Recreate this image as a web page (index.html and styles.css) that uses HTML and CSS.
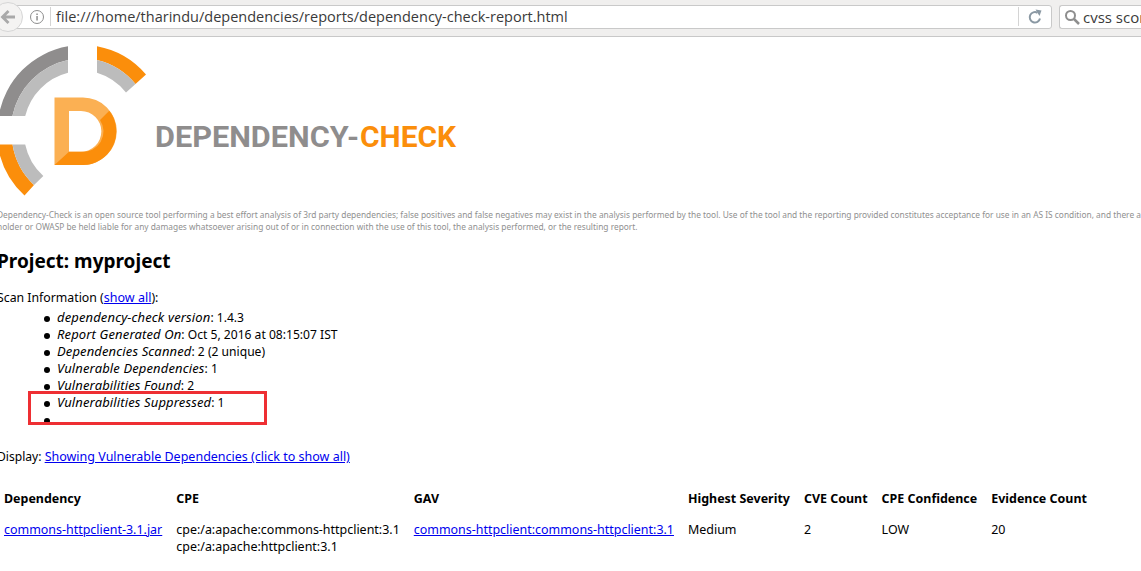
FILE: index.html
```html
<!DOCTYPE html>
<html lang="en">
<head>
<meta charset="utf-8">
<title>Dependency-Check Report</title>
<link rel="stylesheet" href="styles.css">
</head>
<body>
<header class="toolbar">
  <span class="back">
    <svg width="20" height="20" viewBox="0 0 20 20"><path d="M2.500 10 9.500 3 11.500 5 8 8.500H17V11.500H8L11.500 15 9.500 17Z" fill="#a9a9a9"/></svg>
  </span>
  <div class="urlbar">
    <svg class="info" width="16" height="16" viewBox="0 0 16 16"><circle cx="8" cy="8" r="6.500" fill="none" stroke="#8e8e8e"/><rect x="7.300" y="7" width="1.500" height="4.500" fill="#8e8e8e"/><rect x="7.300" y="4.500" width="1.500" height="1.500" fill="#8e8e8e"/></svg>
    <span class="divider"></span>
    <span class="url">file:///home/tharindu/dependencies/reports/dependency-check-report.html</span>
    <span class="divider end"></span>
    <svg class="reload" width="16" height="16" viewBox="0 0 16 16"><path d="M13 9.500A5.200 5.200 0 1 1 10.500 3.800" fill="none" stroke="#8a98a3" stroke-width="2"/><path d="M8.500 0.500 14.500 1.500 12.500 7Z" fill="#8a98a3"/></svg>
  </div>
  <div class="searchbar">
    <svg class="search-icon" width="16" height="16" viewBox="0 0 16 16"><circle cx="6.500" cy="6.500" r="4.500" fill="none" stroke="#8e8e8e" stroke-width="2"/><path d="M10 10 15 15" stroke="#8e8e8e" stroke-width="2.500"/></svg>
    <span class="query">cvss score</span>
  </div>
</header>
<main class="page">
  <svg class="logo" width="470" height="158" viewBox="0 0 470 158">
    <g transform="translate(3 -46)">
      <path d="M68 46.300A85 85 0 0 0-1.300 116H12.400A71.500 71.500 0 0 1 68 60Z" fill="#8f8d8d"/>
      <path d="M68 60A71.500 71.500 0 0 0 12.400 116H25.200A59 59 0 0 1 68 72.800Z" fill="#bcbcbc"/>
      <path d="M97 46.300A85 85 0 0 1 146 74.500L135.500 84A71.500 71.500 0 0 0 97 60Z" fill="#fb8e0b"/>
      <path d="M97 60A71.500 71.500 0 0 1 135.500 84L126 92.500A59 59 0 0 0 97 72.800Z" fill="#bcbcbc"/>
      <path d="M-2.300 144.500A86 86 0 0 0 24.500 195.500L34 185A71.500 71.500 0 0 1 12.500 144.500Z" fill="#fb8e0b"/>
      <path d="M12.500 144.500A71.500 71.500 0 0 0 34 185L43.300 176A59 59 0 0 1 25.200 144.500Z" fill="#bcbcbc"/>
      <path fill-rule="evenodd" d="M54.500 97.500H83A33.750 33.750 0 0 1 83 165H54.500ZM69 111V151.700H81A20.350 20.350 0 0 0 81 111Z" fill="#fbb053"/>
      <path d="M54.500 165 69 151.700H81A20.350 20.350 0 0 0 100 120L109.300 110.700A33.750 33.750 0 0 1 83 165Z" fill="#fb8e0b"/>
    </g>
    <text class="logo-text" x="158" y="101" fill="#8f8d8d" textLength="204" lengthAdjust="spacingAndGlyphs">DEPENDENCY-</text>
    <text class="logo-text" x="363" y="101" fill="#fb8e0b" textLength="96" lengthAdjust="spacingAndGlyphs">CHECK</text>
  </svg>
  <p class="notice">Dependency-Check is an open source tool performing a best effort analysis of 3rd party dependencies; false positives and false negatives may exist in the analysis performed by the tool. Use of the tool and the reporting provided constitutes acceptance for use in an AS IS condition, and there are NO warranties, implied or otherwise, with regard to the analysis or its use. In no event shall the copyright<br>holder or OWASP be held liable for any damages whatsoever arising out of or in connection with the use of this tool, the analysis performed, or the resulting report.</p>
  <h2 class="project">Project: myproject</h2>
  <p class="scan">Scan Information (<a href="#">show all</a>):</p>
  <ul class="info-list">
    <li><i>dependency-check version</i>: 1.4.3</li>
    <li><i>Report Generated On</i>: Oct 5, 2016 at 08:15:07 IST</li>
    <li><i>Dependencies Scanned</i>: 2 (2 unique)</li>
    <li><i>Vulnerable Dependencies</i>: 1</li>
    <li><i>Vulnerabilities Found</i>: 2</li>
    <li><i>Vulnerabilities Suppressed</i>: 1</li>
    <li></li>
  </ul>
  <p class="display">Display: <a href="#">Showing Vulnerable Dependencies (click to show all)</a></p>
  <table class="deps">
    <thead>
      <tr><th>Dependency</th><th>CPE</th><th>GAV</th><th>Highest Severity</th><th>CVE Count</th><th>CPE Confidence</th><th>Evidence Count</th></tr>
    </thead>
    <tbody>
      <tr>
        <td><a href="#">commons-httpclient-3.1.jar</a></td>
        <td>cpe:/a:apache:commons-httpclient:3.1<br>cpe:/a:apache:httpclient:3.1</td>
        <td><a href="#">commons-httpclient:commons-httpclient:3.1</a></td>
        <td>Medium</td><td>2</td><td>LOW</td><td>20</td>
      </tr>
    </tbody>
  </table>
</main>
<div class="highlight"></div>
</body>
</html>
```
FILE: styles.css
```css
html, body { margin: 0; padding: 0; height: 571px; overflow: hidden; background: #fff; }
body { font-family: "Noto Sans", "Open Sans", sans-serif; font-size: 12.500px; color: #000; width: 1141px; }
.toolbar { height: 33px; padding-bottom: 3px; background: #f0efee; border-bottom: 1px solid #c8c8c8; display: flex; align-items: center; box-sizing: content-box; position: relative; }
.back { width: 28px; height: 28px; margin-left: -7px; border: 1px solid #d6d6d6; border-radius: 50%; background: #f4f3f2; display: flex; align-items: center; justify-content: center; flex: none; position: relative; z-index: 1; }
.urlbar { width: 1034px; height: 22px; margin-left: -7px; background: #fff; border: 1px solid #c9c9c9; border-radius: 0 3px 3px 0; display: flex; align-items: center; flex: none; box-sizing: content-box; }
.info { margin-left: 12px; flex: none; }
.divider { width: 1px; height: 19px; background: #d4d4d4; margin-left: 5px; flex: none; }
.url { margin-left: 5px; font-family: "Open Sans", sans-serif; font-size: 14.500px; color: #3a3a3a; white-space: nowrap; flex: 1; }
.divider.end { margin-left: 0; }
.reload { margin: 0 8px 0 8px; flex: none; }
.searchbar { height: 22px; margin-left: 7px; padding-left: 4px; background: #fff; border: 1px solid #c9c9c9; border-radius: 3px 0 0 3px; border-right: 0; display: flex; align-items: center; gap: 3px; flex: 1; min-width: 0; overflow: hidden; }
.search-icon { flex: none; }
.query { font-family: "Open Sans", sans-serif; font-size: 15px; color: #3a3a3a; white-space: nowrap; }
.page { margin-left: -3px; }
.logo { display: block; margin-top: 9px; overflow: visible; }
.logo-text { font-family: Roboto, sans-serif; font-weight: 700; font-size: 30px; }
.notice { margin: 5px 0 0; font-size: 8.350px; line-height: 12px; color: #909090; white-space: nowrap; }
.project { margin: 15px 0 0; font-size: 19px; line-height: 27px; font-weight: 700; }
.scan { margin: 14px 0 0; font-size: 12.300px; line-height: 17px; }
.scan a { font-size: 12.500px; }
.info-list { margin: 3px 0 0; padding: 0 0 0 60px; line-height: 17px; list-style: none; font-size: 12.100px; }
.info-list li { height: 17px; position: relative; }
.info-list li::before { content: ""; position: absolute; left: -13px; top: 6.500px; width: 6px; height: 6px; border-radius: 50%; background: #000; }
.info-list i { font-size: 13px; letter-spacing: 0.130px; }
.display { margin: 20px 0 0; line-height: 17px; font-size: 12.100px; }
.display a { font-size: 12.500px; }
.deps { margin-top: 17px; border-collapse: collapse; font-size: 12.460px; }
.deps th { text-align: left; font-weight: 700; padding: 8px 7px; line-height: 17px; white-space: nowrap; }
.deps td { vertical-align: top; padding: 6px 7px; line-height: 17px; white-space: nowrap; }
a { color: #0000ee; }
.highlight { position: absolute; left: 28px; top: 391px; width: 233px; height: 28px; border: 3px solid #ee2f33; }
```
